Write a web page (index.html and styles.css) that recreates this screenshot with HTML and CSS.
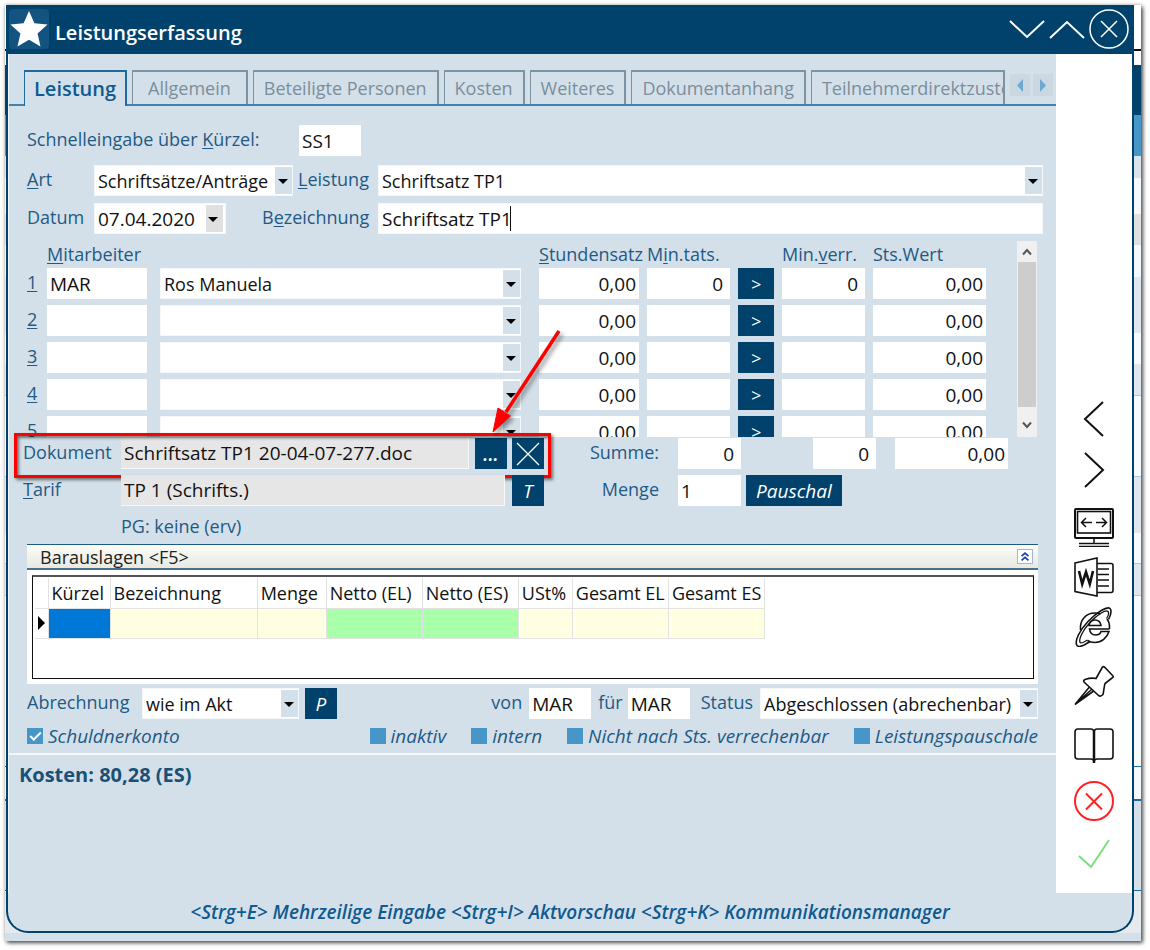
FILE: index.html
```html
<!DOCTYPE html>
<html lang="de">
<head>
<meta charset="utf-8">
<title>Leistungserfassung</title>
<link rel="stylesheet" href="styles.css">
</head>
<body>
<div class="desktop">
<main class="window">
  <header class="titlebar">
    <span class="logo"><svg width="40" height="40" viewBox="0 0 40 40"><path d="M20 2l5.4 12.2 13.1 1.300-9.900 9 2.900 13L20 30.800 8.500 37.500l2.900-13-9.900-9 13.100-1.300z" fill="#fff"/></svg></span>
    <h1>Leistungserfassung</h1>
    <div class="win-controls">
      <button type="button" aria-label="Nach unten"><svg width="36" height="40" viewBox="0 0 36 40"><path d="M1 12l17 16 17-16"/></svg></button>
      <button type="button" aria-label="Nach oben"><svg width="36" height="40" viewBox="0 0 36 40"><path d="M1 29l17-16 17 16"/></svg></button>
      <button type="button" aria-label="Schließen"><svg width="40" height="40" viewBox="0 0 40 40"><circle cx="20" cy="20" r="19" stroke-width="1.500"/><path d="M12 12l16 16M28 12L12 28" stroke-width="1.500"/></svg></button>
    </div>
  </header>
  <div class="content">
    <div class="left">
      <nav class="tabs">
        <button type="button" class="tab active">Leistung</button>
        <button type="button" class="tab">Allgemein</button>
        <button type="button" class="tab">Beteiligte Personen</button>
        <button type="button" class="tab">Kosten</button>
        <button type="button" class="tab">Weiteres</button>
        <button type="button" class="tab">Dokumentanhang</button>
        <button type="button" class="tab last">Teilnehmerdirektzustellung</button>
        <span class="tab-nav">
          <button type="button" aria-label="Zurück"><svg width="20" height="22" viewBox="0 0 20 22"><path d="M13 5v13L7 11.500z"/></svg></button>
          <button type="button" aria-label="Weiter"><svg width="20" height="22" viewBox="0 0 20 22"><path d="M7 5v13l6-6.500z"/></svg></button>
        </span>
      </nav>
      <form class="form">
        <div class="row lead">
          <label for="kz" class="w-lead">Schnelleingabe über <u>K</u>ürzel:</label>
          <input id="kz" class="short" value="SS1">
        </div>
        <div class="row">
          <label for="art" class="w-label"><u>A</u>rt</label>
          <span class="combo w-art"><select id="art"><option>Schriftsätze/Anträge</option></select></span>
          <label for="leistung" class="w-mid"><u>L</u>eistung</label>
          <span class="combo grow"><select id="leistung"><option>Schriftsatz TP1</option></select></span>
        </div>
        <div class="row">
          <label for="datum" class="w-label">Datum</label>
          <span class="combo grey w-date"><input id="datum" value="07.04.2020"></span>
          <label for="bez" class="w-bez">B<u>e</u>zeichnung</label>
          <span class="grow focused"><input id="bez" value="Schriftsatz TP1"></span>
        </div>
        <div class="staff">
          <div class="staff-view">
            <div class="staff-grid head">
              <span class="h-name"><u>M</u>itarbeiter</span>
              <span class="h-rate"><u>S</u>tundensatz</span><span>M<u>i</u>n.tats.</span><span></span><span>Min.<u>v</u>err.</span><span>Sts.Wert</span>
            </div>
            <div class="staff-grid">
              <label for="m1"><u>1</u></label><input id="m1" value="MAR"><span class="combo name"><select aria-label="Name 1"><option>Ros Manuela</option></select></span>
              <input class="num" value="0,00" aria-label="Stundensatz 1"><input class="num wide" value="0" aria-label="Min. tats. 1"><button type="button" class="dark">&gt;</button><input class="num wide" value="0" aria-label="Min. verr. 1"><input class="num" value="0,00" aria-label="Sts. Wert 1">
            </div>
            <div class="staff-grid">
              <label for="m2"><u>2</u></label><input id="m2"><span class="combo name"><select aria-label="Name 2"><option></option></select></span>
              <input class="num" value="0,00" aria-label="Stundensatz 2"><input class="num wide" aria-label="Min. tats. 2"><button type="button" class="dark">&gt;</button><input class="num wide" aria-label="Min. verr. 2"><input class="num" value="0,00" aria-label="Sts. Wert 2">
            </div>
            <div class="staff-grid">
              <label for="m3"><u>3</u></label><input id="m3"><span class="combo name"><select aria-label="Name 3"><option></option></select></span>
              <input class="num" value="0,00" aria-label="Stundensatz 3"><input class="num wide" aria-label="Min. tats. 3"><button type="button" class="dark">&gt;</button><input class="num wide" aria-label="Min. verr. 3"><input class="num" value="0,00" aria-label="Sts. Wert 3">
            </div>
            <div class="staff-grid">
              <label for="m4"><u>4</u></label><input id="m4"><span class="combo name"><select aria-label="Name 4"><option></option></select></span>
              <input class="num" value="0,00" aria-label="Stundensatz 4"><input class="num wide" aria-label="Min. tats. 4"><button type="button" class="dark">&gt;</button><input class="num wide" aria-label="Min. verr. 4"><input class="num" value="0,00" aria-label="Sts. Wert 4">
            </div>
            <div class="staff-grid">
              <label for="m5"><u>5</u></label><input id="m5"><span class="combo name"><select aria-label="Name 5"><option></option></select></span>
              <input class="num" value="0,00" aria-label="Stundensatz 5"><input class="num wide" aria-label="Min. tats. 5"><button type="button" class="dark">&gt;</button><input class="num wide" aria-label="Min. verr. 5"><input class="num" value="0,00" aria-label="Sts. Wert 5">
            </div>
          </div>
          <div class="scrollbar">
            <button type="button" aria-label="Hoch"><svg width="10" height="8" viewBox="0 0 10 8"><path d="M1 6.500l4-4.500 4 4.500"/></svg></button>
            <span class="thumb"></span>
            <button type="button" aria-label="Runter"><svg width="10" height="8" viewBox="0 0 10 8"><path d="M1 1.500l4 4.500 4-4.500"/></svg></button>
          </div>
        </div>
        <div class="row doc">
          <div class="doc-left">
            <label for="dok" class="w-doc">Dokument</label>
            <input id="dok" class="grow readonly" readonly value="Schriftsatz TP1 20-04-07-277.doc">
            <button type="button" class="dark sq dots">...</button>
            <button type="button" class="dark sq" aria-label="Entfernen"><svg width="24" height="24" viewBox="0 0 24 24"><path d="M1 1l22 22M23 1L1 23" stroke="#fff" stroke-width="1.300"/></svg></button>
            <span class="marker"></span>
            <svg class="pointer" width="84" height="112" viewBox="0 0 84 112"><path d="M70 5L17 86" stroke="#f00" stroke-width="3.500"/><path d="M4 106L9 82l12.500 8z" fill="#f00" stroke="#f00" stroke-width="1"/></svg>
          </div>
          <div class="sums">
            <label for="s1">Summe:</label>
            <input id="s1" class="num sum" value="0">
            <input class="num sum second" value="0" aria-label="Summe Min. verr.">
            <input class="num total" value="0,00" aria-label="Summe Wert">
          </div>
        </div>
        <div class="row doc">
          <div class="doc-left">
            <label for="tarif" class="w-doc"><u>T</u>arif</label>
            <input id="tarif" class="grow readonly" readonly value="TP 1 (Schrifts.)">
            <button type="button" class="dark sq">T</button>
          </div>
          <div class="sums">
            <label for="menge">Menge</label>
            <input id="menge" class="sum" value="1">
            <button type="button" class="dark flat">Pauschal</button>
          </div>
        </div>
        <p class="pg">PG: keine (erv)</p>
        <section class="group">
          <div class="group-head"><span>Barauslagen &lt;F5&gt;</span>
            <button type="button" aria-label="Einklappen"><svg width="16" height="15" viewBox="0 0 16 15"><path d="M4 7l4-3.500L12 7M4 12l4-3.500 4 3.500"/></svg></button></div>
          <div class="grid-box">
            <table>
              <thead><tr><th class="c0"></th><th class="c1">Kürzel</th><th class="c2">Bezeichnung</th><th class="c3">Menge</th><th class="c4">Netto (EL)</th><th class="c4">Netto (ES)</th><th class="c5">USt%</th><th class="c4">Gesamt EL</th><th class="c4">Gesamt ES</th></tr></thead>
              <tbody><tr><td class="cursor"><svg width="9" height="14" viewBox="0 0 9 14"><path d="M1 0v14l7-7z"/></svg></td><td class="sel"></td><td></td><td></td><td class="green"></td><td class="green"></td><td></td><td></td><td></td></tr></tbody>
            </table>
          </div>
        </section>
        <div class="row billing">
          <label for="abr" class="w-abr">Abrechnung</label>
          <span class="combo w-akt"><select id="abr"><option>wie im Akt</option></select></span>
          <button type="button" class="dark sq">P</button>
          <span class="grow"></span>
          <label for="von">von</label><input id="von" class="short" value="MAR">
          <label for="fuer">für</label><input id="fuer" class="short last" value="MAR">
          <label for="status" class="l-status">Status</label>
          <span class="combo w-status"><select id="status"><option>Abgeschlossen (abrechenbar)</option></select></span>
        </div>
        <div class="checks">
          <label class="first"><input type="checkbox" checked>Schuldnerkonto</label>
          <label><input type="checkbox">inaktiv</label>
          <label><input type="checkbox">intern</label>
          <label><input type="checkbox">Nicht nach Sts. verrechenbar</label>
          <label><input type="checkbox">Leistungspauschale</label>
        </div>
      </form>
      <p class="costs">Kosten: 80,28 (ES)</p>
    </div>
    <aside class="sidebar">
      <div>
        <button type="button" aria-label="Zurück"><svg width="40" height="40" viewBox="0 0 40 40"><path d="M29 3L11 20l18 17" stroke-width="2"/></svg></button>
        <button type="button" aria-label="Vor"><svg width="40" height="40" viewBox="0 0 40 40"><path d="M11 4l18 17-18 17" stroke-width="2"/></svg></button>
      </div>
      <div>
        <button type="button" aria-label="Bildschirm"><svg width="40" height="40" viewBox="0 0 40 40"><rect x="1" y="2" width="38" height="29" rx="1" stroke-width="2"/><rect x="3.500" y="4.500" width="33" height="21.500"/><path d="M20 31v5M5 36.500h30M5 39.500h30M18 15.500H8M12 11l-4.500 4.500L12 20M22 15.500h10M28 11l4.500 4.500L28 20" stroke-width="1.500"/></svg></button>
        <button type="button" aria-label="Word"><svg width="40" height="40" viewBox="0 0 40 40"><path d="M1 6l22-5v38L1 34.500zM23 6.500h14q2 0 2 2v25q0 2-2 2H23M24 12h11M24 17.500h11M24 23h11M24 29h11" stroke-width="1.600"/><path d="M5 14l3.200 13L12 15l3.800 12L19 14" stroke-width="2.600"/></svg></button>
        <button type="button" aria-label="Internet"><svg width="40" height="40" viewBox="0 0 40 40"><path d="M35.500 22H15.500c.5 4 3 6 6 6 3 0 5-1.500 5.500-3.500h8C33 31 27.500 35.500 21 35.500c-3 0-5.500-.5-7.500-2M6.500 23C5.500 13 12 6 21 6c2 0 4 .3 5.500 1M33 12q3 4 2.500 10M15 18.500c.5-3.500 3-5.500 6-5.500s5.500 2 6 5.500z"/><path d="M16 34.500C10 38.500 5 41 3 38.500 0 34 6 23 14 14.500 23 5 33-1 36 1.500c2 2 1 6-1.500 11"/><path d="M13.500 33c-4 2.500-6.500 4-7.500 2.500C4.500 32 9 23 16 15.500 24 7 32 2.500 34 4.500c1.200 1.500.5 4-1.500 7" stroke-width="1.300"/></svg></button>
      </div>
      <div>
        <button type="button" aria-label="Anheften"><svg width="40" height="40" viewBox="0 0 40 40"><path d="M28.500 2Q29.500 1 31 2.500l8 8.500q1 1-1 2L31 18.500c-1 3-1 7-2 11q-3 3-5 .5L10 17q-1-1 1-2.500 6-2 11-1zM15 22.500L1 39.500l18-13M17.500 24.500L1 39.500"/></svg></button>
      </div>
      <div>
        <button type="button" aria-label="Buch"><svg width="40" height="40" viewBox="0 0 40 40"><path d="M20 8Q19 6 17 6H4Q1 6 1 9v24q0 3 3 3h13q2 0 3 2 1-2 3-2h13q3 0 3-3V9q0-3-3-3H23q-2 0-3 2z"/><path d="M20 7v33" stroke-width="2.500"/></svg></button>
      </div>
      <div>
        <button type="button" aria-label="Abbrechen" class="red"><svg width="40" height="40" viewBox="0 0 40 40"><circle cx="20" cy="20" r="19"/><path d="M12 12.500l16 16M28 12.500L12 28.500"/></svg></button>
        <button type="button" aria-label="Speichern" class="ok"><svg width="40" height="40" viewBox="0 0 40 40"><path d="M5 25l12 11L35 9"/></svg></button>
      </div>
    </aside>
  </div>
  <footer class="hints">&lt;Strg+E&gt; Mehrzeilige Eingabe &lt;Strg+I&gt; Aktvorschau &lt;Strg+K&gt; Kommunikationsmanager</footer>
</main>
</div>
</body>
</html>
```
FILE: styles.css
```css
* { box-sizing: border-box; }
body {
  margin: 0;
  padding: 5px 9px 9px 5px;
  min-height: 100vh;
  display: flex;
  background: #fff;
  font: 18px/24px "Open Sans", "Noto Sans", sans-serif;
  color: #1e5a86;
}
button, input, select { font: inherit; color: #111; border: 0; border-radius: 0; margin: 0; padding: 0; outline: 0; }
input { min-width: 0; }
button { background: none; }
u { text-decoration-thickness: 1px; text-underline-offset: 2px; }
svg { display: block; fill: none; }

.desktop {
  flex: 1;
  display: flex;
  padding: 0 7px 8px 1px;
  box-shadow: 2px 2px 4px rgba(0, 0, 0, .65), 0 0 4px rgba(0, 0, 0, .25);
  background:
    linear-gradient(#d4e0e9, #d4e0e9) bottom / 100% 8px no-repeat,
    linear-gradient(#fff 44px, #111 44px 46px, #fff 46px 60px, #00426b 60px 110px, #4696c8 110px 151px,
      #d8e3ec 151px 173px, #f4f9fe 173px 209px, #e0e0e0 209px 240px, #f4f9fe 240px 272px, #dfe7ef 272px 328px,
      #f8fbfe 328px 359px, #dfe7ef 359px 390px, #a9c6dc 390px 391px, #f8fbfe 391px 471px, #a9c6dc 471px 472px, #dfe7ef 472px 528px,
      #f8fbfe 528px 558px, #a9c6dc 558px 559px, #dfe7ef 559px 590px, #a9c6dc 590px 591px, #f8fbfe 591px 761px, #1e6a9a 761px 762px, #f4f9fe 762px 794px,
      #1e6a9a 794px 796px, #d4e0e9 796px 885px, #1e6a9a 885px 886px, #e6eaee 886px);
}
.window {
  flex: 1;
  display: flex;
  flex-direction: column;
  min-width: 0;
  background: #d4e0e9;
  border: 2px solid #00426b;
  border-top: 0;
  border-radius: 0 0 22px 22px;
}
.titlebar { display: flex; align-items: center; height: 49px; background: #00426b; padding: 0 3px 2px 1px; }
.logo { background: #12547f; border-radius: 4px; }
.titlebar h1 { flex: 1; margin: 8px 0 0 6px; font-size: 20px; font-weight: 600; color: #fff; }
.win-controls { display: flex; gap: 4px; stroke: #fff; stroke-width: 2; }

.content { flex: 1; display: grid; grid-template-columns: minmax(0, 1fr) 76px; }
.left { border-left: 1px solid #eef3f7; }
.tabs { display: flex; gap: 5px; margin-top: 16px; padding: 0 3px 0 15px; height: 36px; border-bottom: 2px solid #3f82b0; }
.tab { height: 34px; padding: 0 10px; white-space: nowrap; color: #7b8e9c; border: 1px solid #7b93a3; border-width: 2px 2px 0 1px; }
.tab:nth-child(2) { padding: 0 15px; }
.tab.active { height: 36px; padding: 0 9px; font-weight: 600; font-size: 20px; color: #0f5a90; background: #d4e0e9; border-color: #1f6a9f; }
.tab.last { flex: 1; min-width: 0; overflow: hidden; text-align: left; }
.tab-nav { display: flex; gap: 3px; padding-top: 4px; }
.tab-nav button { height: 22px; background: #ccd8e1; }
.tab-nav path { fill: #6fa9d2; }

.form { padding: 19px 13px 0 18px; border-bottom: 2px solid #f4f8fa; }
.row { display: flex; align-items: flex-start; margin-bottom: 7px; }
.row.lead { margin-bottom: 9px; }
label { white-space: nowrap; line-height: 28px; }
.form input, select { height: 31px; background: #fff; padding-left: 3px; }
.form input { font-size: 19px; }
.grow { flex: 1; min-width: 0; }
.w-lead { width: 272px; }
.w-label { width: 67px; }
.w-art { width: 199px; }
.w-mid { width: 85px; padding-left: 5px; }
.w-date { width: 132px; }
.w-bez { width: 152px; padding-left: 36px; }
.form .short { width: 62px; }
.combo { position: relative; display: block; }
.combo select, .combo input, .focused input { width: 100%; display: block; appearance: none; border: 1px solid #f4f8fa; }
.combo::before { content: ""; position: absolute; right: 1px; top: 2px; bottom: 2px; width: 17px; background: #d4e0e9; pointer-events: none; }
.combo.grey::before { background: #e0e0e0; right: 3px; }
.combo::after { content: ""; position: absolute; right: 5px; top: 14px; border: 5px solid transparent; border-top-color: #000; border-bottom: 0; pointer-events: none; }
.combo.grey::after { right: 8px; }
.focused { position: relative; }
.focused::after { content: ""; position: absolute; left: 132px; top: 3px; width: 1px; height: 25px; background: #111; }

.staff { display: flex; height: 196px; }
.staff-view { flex: 1; min-width: 0; overflow: hidden; }
.staff-grid { display: grid; grid-template-columns: 12px 100px minmax(0, 1fr) 100px 83px 36px 83px 113px; column-gap: 8px; margin-bottom: 6px; }
.staff-grid.head { height: 27px; margin: 0; line-height: 26px; white-space: nowrap; }
.h-name { grid-column: 2 / 4; }
.name { margin: 0 10px 0 5px; }
.form .num { text-align: right; padding-right: 3px; width: 100%; }
.form .num.wide { padding-right: 7px; }
.dark { height: 31px; background: #00426b; color: #fff; font-size: 19px; font-style: italic; }
.staff-grid .dark { font-size: 18px; }
.scrollbar { width: 20px; margin: 0 6px 0 31px; background: #f0f0f0; display: flex; flex-direction: column; }
.scrollbar button { height: 21px; display: grid; place-items: center; stroke: #555; stroke-width: 2; }
.scrollbar button:last-child { height: 30px; padding-top: 14px; place-items: start center; }
.thumb { flex: 1; background: #cdcdcd; margin: 0 1px; }

.row.doc { margin: 1px 0 6px -4px; }
.row.doc + .row.doc { margin: 0 0 0 -4px; }
.doc-left { flex: 1; min-width: 0; display: flex; position: relative; }
.w-doc { width: 98px; }
.form .readonly { background: #e6e6e6; border: 1px solid #f8f8f8; border-width: 0 1px 1px 0; }
.sq { width: 32px; margin-left: 7px; display: grid; place-items: center; }
.sq.dots { margin-left: 6px; font-weight: 600; }
.sq + .sq { margin-left: 5px; }
.marker { position: absolute; inset: -5px -7px -9px -9px; border: 3px solid #f00; box-shadow: 2px 2px 3px rgba(0, 0, 0, .5), inset 2px 2px 3px rgba(0, 0, 0, .5); pointer-events: none; }
.pointer { position: absolute; right: -29px; bottom: 31px; pointer-events: none; filter: drop-shadow(3px 3px 2px rgba(0, 0, 0, .4)); }
.sums { width: 499px; display: flex; }
.sums label { width: 134px; padding-right: 19px; text-align: right; }
.form .sum { width: 63px; padding-right: 7px; }
.form .second { margin-left: 72px; }
.form .total { width: 113px; margin-left: 19px; }
.flat { padding: 0 10px; margin-left: 5px; }
.pg { margin: 0; padding: 8px 0 6px 94px; }

.group { margin-right: 5px; background: #fff; border-top: 1px solid #1e5a86; padding-bottom: 5px; }
.group-head { display: flex; justify-content: space-between; align-items: center; height: 25px; padding: 0 5px 0 13px; color: #222; background: linear-gradient(#fdfdf8, #e9e9e2); border-bottom: 2px solid #4a7090; }
.group-head button { border: 1px solid #a0b4dc; background: #fff; }
.group-head svg { width: 14px; height: 13px; stroke: #1243b0; stroke-width: 2; }
.grid-box { margin: 5px 4px 0 5px; height: 104px; border: 1px solid #111; border-top: 2px solid #555; padding: 1px 2px; }
table { border-collapse: collapse; table-layout: fixed; width: 730px; color: #111; }
th, td { height: 30px; padding: 0 0 0 3px; font-weight: 400; text-align: left; white-space: nowrap; border: 1px solid #e2e2e2; border-width: 0 1px 1px 0; }
td { background: #ffffe1; }
.c0 { width: 13px; } .c1 { width: 62px; } .c2 { width: 147px; } .c3 { width: 69px; } .c4 { width: 96px; } .c5 { width: 54px; }
td.cursor { background: #fff; padding-left: 2px; }
.cursor svg { fill: #000; }
td.sel { background: #0078d7; }
td.green { background: #aaffaa; }

.row.billing { margin: 4px 5px 0 0; }
.w-abr { width: 115px; }
.w-akt { width: 157px; }
.billing .sq { margin-left: 6px; }
.billing input + label, .billing .short { margin-left: 7px; }
.billing .short.last { margin-left: 5px; }
.billing .l-status { margin-right: 7px; padding-left: 4px; }
.w-status { width: 278px; }
.checks { display: flex; gap: 25px; margin-right: 5px; height: 34px; font-size: 19px; font-style: italic; color: #1e5a86; }
.checks label { display: flex; align-items: center; line-height: 34px; }
.checks .first { margin-right: auto; }
.checks input { appearance: none; width: 16px; height: 16px; margin-right: 5px; background: #4696c8; display: grid; place-items: center; padding: 0; }
.checks input:checked::after { content: ""; width: 9px; height: 4px; margin-bottom: 3px; border: solid #fff; border-width: 0 0 2px 2px; transform: rotate(-45deg); }
.costs { margin: 8px 0 0 10px; font-size: 20px; font-weight: 700; color: #1a5078; }

.sidebar { background: #fff; display: flex; flex-direction: column; justify-content: flex-end; align-items: center; gap: 18px; padding: 20px 0 22px; }
.sidebar div { display: flex; flex-direction: column; gap: 10px; }
.sidebar svg { stroke: #111; stroke-width: 1.600; }
.sidebar .red svg { stroke: #f22; stroke-width: 2; }
.sidebar .ok svg { stroke: #7be07b; stroke-width: 2; }
.hints { height: 38px; line-height: 38px; text-align: center; font-style: italic; font-weight: 600; font-size: 19px; color: #0f5a90; }
```
